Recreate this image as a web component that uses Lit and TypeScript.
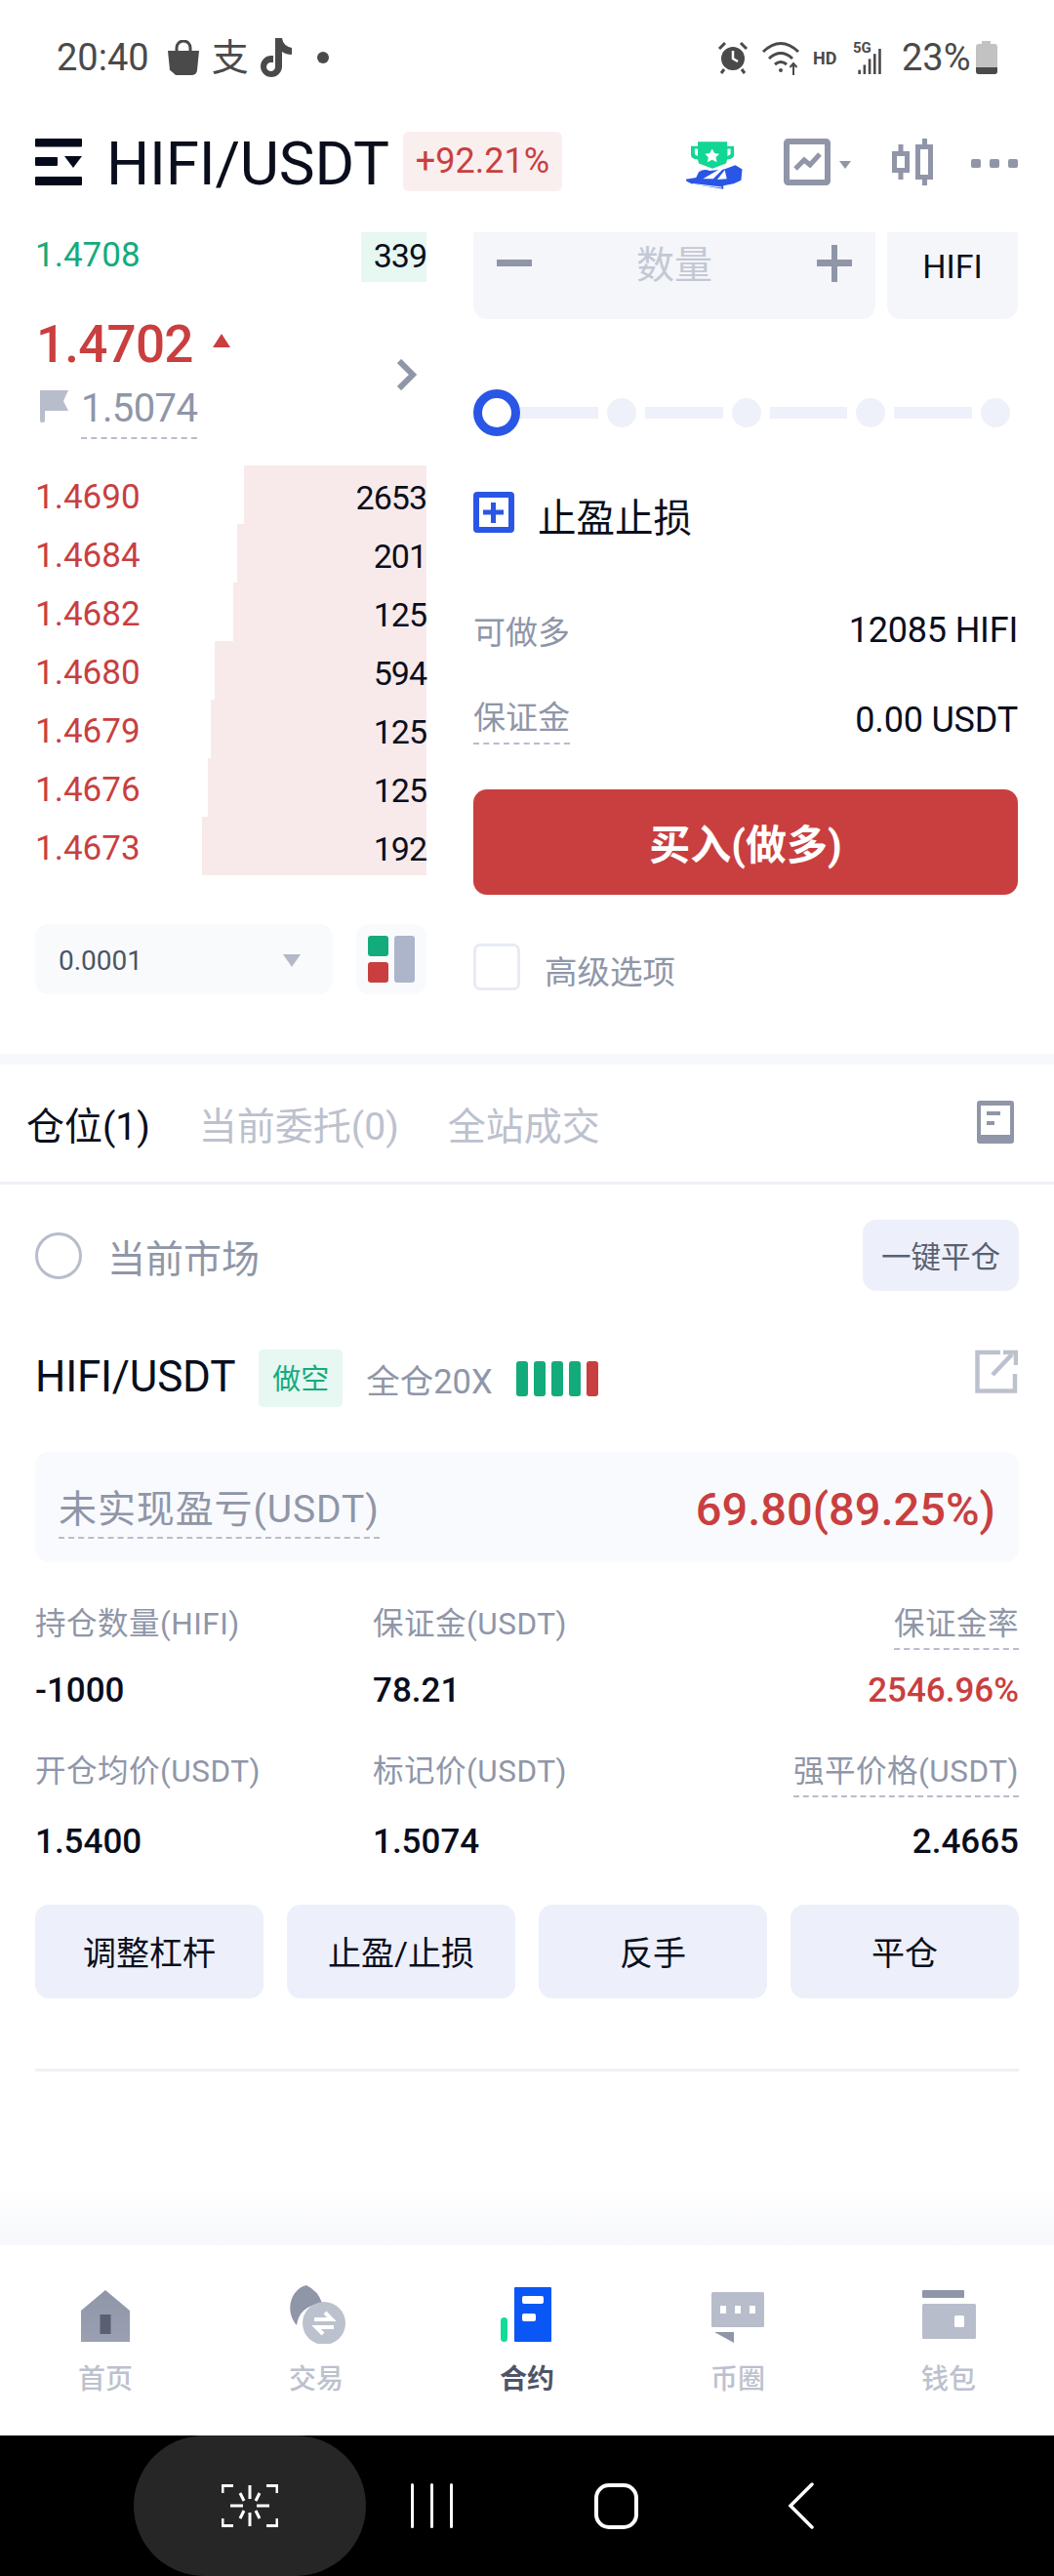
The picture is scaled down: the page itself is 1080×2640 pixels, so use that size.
import { LitElement, html, css, svg } from "lit";
import { customElement } from "lit/decorators.js";

const asks = [
  ["1.4690", "2653", 187],
  ["1.4684", "201", 194],
  ["1.4682", "125", 198],
  ["1.4680", "594", 217],
  ["1.4679", "125", 221],
  ["1.4676", "125", 224],
  ["1.4673", "192", 230],
] as const;

const stats = [
  [
    { l: "持仓数量(HIFI)", v: "-1000" },
    { l: "保证金(USDT)", v: "78.21" },
    { l: "保证金率", v: "2546.96%", dash: true, red: true },
  ],
  [
    { l: "开仓均价(USDT)", v: "1.5400" },
    { l: "标记价(USDT)", v: "1.5074" },
    { l: "强平价格(USDT)", v: "2.4665", dash: true },
  ],
];

const statusLeft = html`
  <svg width="34" height="36" viewBox="0 0 34 36"><path d="M10 11V8a7 7 0 0 1 14 0v3" fill="none" stroke="#4a4a4a" stroke-width="3"/><path d="M1 11h32l-2 20q-.5 5-6 5H9q-5.500-5-6-5z" fill="#4a4a4a"/></svg>
  <span class="zhi">支</span>
  <svg width="38" height="40" viewBox="0 0 38 40"><path d="M20 0h7q1 8 10 10v7q-6 0-10-3v15a11 11 0 1 1-11-11h2v7h-2a4.500 4.500 0 1 0 4 4.500z" fill="#4a4a4a"/></svg>
  <span class="sdot"></span>`;

const statusRight = html`
  <svg width="32" height="34" viewBox="0 0 32 34"><circle cx="16" cy="18" r="12" fill="#4a4a4a"/><path d="M16 10v8l5 3" stroke="#fff" stroke-width="2.500" fill="none"/><path d="M2 8l6-6M30 8l-6-6M7 29l-3 4M25 29l3 4" stroke="#4a4a4a" stroke-width="3"/></svg>
  <svg class="wifi" width="42" height="38" viewBox="0 0 42 38" fill="none" stroke="#4a4a4a" stroke-width="3"><path d="M2 13Q20-4 38 13M8 20q12-11 24 0M14 26q6-5 12 0"/><circle cx="20" cy="32" r="2" fill="#4a4a4a" stroke="none"/><path d="M33 37V25M29.500 29l3.500-4 3.500 4" stroke-width="2"/></svg>
  <span class="hd">HD</span>
  <span class="sig">
    <span class="fiveg">5G</span>
    <svg width="28" height="30" viewBox="0 0 28 30" fill="#4a4a4a"><rect x="0" y="25" width="3" height="5"/><rect x="6" y="19" width="3" height="11"/><rect x="12" y="12" width="3" height="18"/><rect x="18" y="6" width="3" height="24"/><rect x="24" y="0" width="3" height="30"/></svg>
  </span>
  <span class="pct">23%</span>
  <svg width="22" height="34" viewBox="0 0 22 34"><path d="M6 0h9v3h4q3 0 3 3v25q0 3-3 3H3q-3 0-3-3V6q0-3 3-3h3z" fill="#c2c2c2"/><path d="M0 27h22v4q0 3-3 3H3q-3 0-3-3z" fill="#4a4a4a"/></svg>`;

const menuIcon = html`<svg class="menu" width="48" height="48" viewBox="0 0 48 48" fill="#050a1a"><rect width="48" height="8.500" rx="1"/><rect y="19" width="23" height="9" rx="1"/><path d="M30 18h18l-9 12z"/><rect y="39" width="48" height="9" rx="1"/></svg>`;

const trophy = html`<svg width="63" height="54" viewBox="75 92 180 154">
  <path d="M115 101h86v13h20v27q-2 11-20 12l-3 12-40 15-40-15-3-12q-18-1-20-12v-27h20z" fill="#12d694"/>
  <path d="M106 122h9v21q-9-2-9-8zM211 122h-9v21q9-2 9-8z" fill="#fff"/>
  <path d="M157 122l7 13 14 2-10 10 3 14-14-7-14 7 3-14-10-10 14-2z" fill="#fff"/>
  <path d="M80 211l30-5 8-16q14-11 32-4l42-4 33-12 20 12-3 32-22 10-30 6v10l-92-15-16-8z" fill="#2a56e6"/>
  <path d="M130 210l48-28 12-2-30 30zM172 212l22-28 6 26z" fill="#fff"/>
  <path d="M100 225l85 10" stroke="#fff" stroke-width="3"/>
</svg>`;

const chartIcon = html`<svg width="70" height="48" viewBox="0 0 70 48">
  <rect x="3" y="3" width="42" height="42" rx="1.500" fill="none" stroke="#9096a8" stroke-width="6"/>
  <path d="M12 31l9-9 6 5 10-11" fill="none" stroke="#9096a8" stroke-width="5"/>
  <path d="M57 23h12l-6 8z" fill="#9096a8"/>
</svg>`;

const candleIcon = html`<svg width="42" height="48" viewBox="0 0 42 48" fill="#9096a8">
  <rect x="6.500" y="6" width="5" height="7"/><rect x="6.500" y="35" width="5" height="7"/>
  <path fill-rule="evenodd" d="M0 13h18v22H0zM5 18v12h8V18z"/>
  <rect x="31" y="0" width="5" height="6"/><rect x="31" y="42" width="5" height="6"/>
  <path fill-rule="evenodd" d="M24 6h18v36H24zM29 11v26h8V11z"/>
</svg>`;

const moreIcon = html`<span class="more"><i></i><i></i><i></i></span>`;

const docIcon = html`<svg width="38" height="44" viewBox="0 0 38 44"><rect x="2" y="2" width="34" height="40" rx="1" fill="none" stroke="#9096a8" stroke-width="4"/><rect x="2" y="35" width="34" height="7" fill="#9096a8"/><rect x="2" y="1" width="34" height="4" fill="#9096a8"/><rect x="10" y="11" width="14" height="4" fill="#9096a8"/><rect x="10" y="21" width="8" height="4" fill="#9096a8"/></svg>`;

const extIcon = html`<svg width="44" height="45" viewBox="0 0 44 45" fill="none" stroke="#bcc1ce" stroke-width="4.500"><path d="M26 3H2.500v39.500H41V25"/><path d="M18 26L38 5"/><path d="M29 3h13v13"/></svg>`;

const navIcons = [
  svg`<defs><linearGradient id="h" x1="0" y1="0" x2="0" y2="1"><stop offset="0" stop-color="#8f96a8"/><stop offset="1" stop-color="#9aa0b2"/></linearGradient></defs><path d="M25 5l25 21v32H0V26z" fill="url(#h)"/><rect x="19.500" y="30" width="11" height="20" fill="#5a6072"/>`,
  svg`<path d="M22 0C8 3-2 24 12 41Q14 22 38 18 34 6 22 0z" fill="#8f96a8"/><ellipse cx="40" cy="39" rx="22" ry="22" fill="#bcc1ce"/><path d="M30 35h18l-7-7M50 43H32l7 7" fill="none" stroke="#fff" stroke-width="4"/>`,
  svg`<rect x="14" y="2" width="38" height="56" rx="1" fill="#0a57f5"/><rect x="22" y="11" width="22" height="8" rx="2" fill="#fff"/><rect x="22" y="29" width="14" height="8" rx="2" fill="#fff"/><rect x="0" y="33" width="7" height="25" rx="3.500" fill="#12dc98"/>`,
  svg`<rect x="0" y="7" width="54" height="36" rx="1.500" fill="#b8bdcc"/><rect x="9" y="21" width="6" height="8" fill="#fff"/><rect x="24" y="21" width="6" height="8" fill="#fff"/><rect x="39" y="21" width="6" height="8" fill="#fff"/><path d="M3 48h20v11z" fill="#8f96a8"/>`,
  svg`<rect x="0" y="5" width="43" height="8" rx="1" fill="#8f96a8"/><rect x="0" y="19" width="55" height="36" rx="1.500" fill="#b8bdcc"/><rect x="33" y="31" width="10" height="12" rx="1.500" fill="#fff"/>`,
];
const navWidths = [50, 64, 54, 54, 55];
const navLabels = ["首页", "交易", "合约", "币圈", "钱包"];

const capture = html`<svg width="58" height="44" viewBox="0 0 58 44" fill="none" stroke="#fff" stroke-width="3">
  <path d="M1 9V1.500h11M57 9V1.500H46M1 35v7.500h11M57 35v7.500H46"/>
  <path d="M29 1v14M29 29v14M19 9l4 8M39 9l-4 8M19 35l4-8M39 35l-4-8M9 22h13M36 22h13"/>
</svg>`;

@customElement("app-root")
export class AppRoot extends LitElement {
  static styles = css`
    :host {
      display: flex;
      flex-direction: column;
      width: 1080px;
      height: 2640px;
      overflow: hidden;
      background: #fff;
      font-family: Roboto, "Noto Sans CJK SC", sans-serif;
      color: #0a0e1c;
      box-sizing: border-box;
    }
    * { box-sizing: border-box; }
    .status {
      height: 120px; flex: none; display: flex; justify-content: space-between; align-items: flex-start;
      padding: 39px 58px 0 58px; color: #4a4a4a;
    }
    .status-l, .status-r { display: flex; align-items: center; height: 40px; }
    .time { font-size: 38px; line-height: 40px; margin-right: 18px; }
    .zhi { font-size: 38px; line-height: 40px; margin: 0 5px 0 12px; width: 40px; }
    .sdot { width: 12px; height: 12px; border-radius: 50%; background: #4a4a4a; margin-left: 25px; }
    .wifi { margin-left: 13px; }
    .hd { font-size: 18px; font-weight: 700; margin-left: 11px; width: 29px; }
    .sig { display: flex; align-items: flex-end; width: 40px; margin-left: 12px; height: 40px; position: relative; }
    .fiveg { font-size: 15px; font-weight: 700; line-height: 16px; position: absolute; left: 0; top: 2px; }
    .sig svg { margin-left: 10px; margin-bottom: 3px; width: 27px; height: 26px; }
    .pct { font-size: 38px; line-height: 40px; margin-left: 10px; width: 72px; }
    .status-r svg:last-child { margin-left: 4px; }
    .header { height: 118px; flex: none; display: flex; align-items: flex-start; padding: 15px 37px 0 36px; }
    .menu { margin-top: 7px; flex: none; }
    .title { font-size: 62px; line-height: 62px; margin: 2px 0 0 25px; letter-spacing: -0.2px; white-space: nowrap; }
    .pill {
      width: 163px; height: 61px; margin: 0 0 0 14px; background: #faefef; border-radius: 6px;
      color: #c93f3f; font-size: 36px; line-height: 61px; text-align: center;
    }
    .tools { margin-left: auto; display: flex; align-items: flex-start; }
    .tools > :nth-child(1) { margin: 7px 0 0 0; }
    .tools > :nth-child(2) { margin: 7px 0 0 39px; }
    .tools > :nth-child(3) { margin: 7px 0 0 41px; }
    .more { display: flex; gap: 9px; margin: 28px 0 0 39px !important; }
    .more i { width: 10px; height: 9px; border-radius: 2px; background: #9096a8; }

    .trade { height: 842px; flex: none; display: flex; padding-left: 36px; }
    .book { width: 401px; flex: none; }
    .row { position: relative; display: flex; justify-content: space-between; font-size: 35px; }
    .row span { position: relative; }
    .depth { position: absolute; top: 0; bottom: 0; right: 0; }
    .bid { height: 51px; line-height: 48px; color: #14ab7c; }
    .bid .depth { background: #e7f7f1; }
    .ask { height: 60px; line-height: 66px; color: #c93f3f; }
    .ask .depth { background: #f8eaea; }
    .row b { font-weight: 400; color: #0a0e1c; position: relative; font-size: 34px; letter-spacing: -1px; }
    .mid { height: 188px; display: flex; justify-content: space-between; padding: 36px 10px 0 2px; }
    .last { font-size: 53px; font-weight: 500; line-height: 56px; color: #c93f3f; display: flex; align-items: center; gap: 20px; letter-spacing: -0.8px; margin-left: -1px; }
    .last i { width: 0; height: 0; border-left: 9px solid transparent; border-right: 9px solid transparent; border-bottom: 14px solid #c93f3f; margin-top: -8px; }
    .mark { display: flex; margin-top: 14px; align-items: flex-start; gap: 13px; }
    .mark svg { margin: 5px 0 0 3px; }
    .mark-val { font-size: 40px; line-height: 48px; color: #8f96a8; padding-bottom: 5px; border-bottom: 2px dashed #b8bdcc; letter-spacing: -0.6px; }
    .chev { margin-top: 43px; }
    .book-foot { display: flex; justify-content: space-between; margin-top: 50px; }
    .sel {
      width: 305px; height: 72px; background: #f9fafc; border-radius: 14px; display: flex; align-items: center;
      justify-content: space-between; padding: 2px 33px 0 24px; font-size: 28px; color: #4a5568;
    }
    .sel i { width: 0; height: 0; border-left: 9px solid transparent; border-right: 9px solid transparent; border-top: 13px solid #b4b9c7; }
    .lay { width: 72px; height: 72px; background: #f9fafc; border-radius: 14px; display: grid; grid-template-columns: 21px 21px; grid-template-rows: 21px 21px; gap: 6px; padding: 12px; }
    .lay i { border-radius: 3px; }
    .lay .g { background: #14ab7c; }
    .lay .r { background: #c93f3f; grid-row: 2; grid-column: 1; }
    .lay .b { background: #acb5ca; grid-row: 1 / 3; grid-column: 2; }

    .order { width: 558px; margin-left: 48px; flex: none; }
    .inp-row { display: flex; height: 89px; gap: 12px; }
    .inp {
      width: 412px; background: #f4f6fa; border-radius: 0 0 14px 14px; display: flex; justify-content: space-between;
      align-items: flex-start; padding: 10px 24px 0 24px; color: #c4c8d4; font-size: 39px; line-height: 48px;
    }
    .inp svg { margin-top: 3px; }
    .unit { width: 134px; background: #f4f6fa; border-radius: 0 0 14px 14px; text-align: center; font-size: 34px; line-height: 46px; padding-top: 12px; }
    .slider { display: flex; align-items: center; height: 48px; margin-top: 72px; }
    .knob { width: 48px; height: 48px; border: 9px solid #2a56e6; border-radius: 50%; flex: none; }
    .seg { height: 12px; background: #eef1f9; flex: 1; }
    .dot { width: 30px; height: 30px; border-radius: 50%; background: #eef1f9; flex: none; margin: 0 9px; }
    .tpsl { display: flex; margin-top: 57px; height: 42px; align-items: center; gap: 24px; font-size: 39.500px; }
    .tpsl span { margin-top: 4px; }
    .kv { display: flex; justify-content: space-between; align-items: center; font-size: 33px; height: 50px; color: #8f96a8; }
    .kv b { font-weight: 400; color: #0a0e1c; font-size: 36px; letter-spacing: -0.2px; }
    .k1 { margin-top: 75px; }
    .k2 { margin-top: 42px; height: 58px; align-items: flex-start; }
    .k2 span { border-bottom: 2px dashed #b8bdcc; line-height: 46px; padding-bottom: 2px; }
    .k2 b { line-height: 50px; }
    .buy {
      margin-top: 38px; height: 108px; background: #c93f3f; border-radius: 14px; color: #fff; font-weight: 700;
      font-size: 42px; line-height: 116px; text-align: center;
    }
    .adv { display: flex; align-items: center; margin-top: 50px; gap: 25px; color: #8f96a8; font-size: 33.500px; height: 48px; }
    .adv i { width: 48px; height: 48px; border: 3px solid #e8ebf3; border-radius: 7px; }
    .adv span { margin-top: 4px; }

    .band { height: 11px; flex: none; background: #f7f8fb; }
    .tabs { height: 123px; flex: none; display: flex; align-items: center; padding: 0 41px 0 27px; border-bottom: 3px solid #eef1f8; font-size: 39px; color: #bcc1ce; gap: 50px; }
    .tabs .on { color: #0a0e1c; }
    .tabs svg { margin-left: auto; margin-top: -3px; }
    .body { padding: 36px 36px 0; flex: none; }
    .filter { display: flex; align-items: center; height: 73px; color: #8f96a8; font-size: 39px; }
    .radio { width: 48px; height: 48px; border: 3px solid #b8bdcc; border-radius: 50%; margin-right: 26px; }
    .close-all { margin-left: auto; width: 160px; height: 73px; background: #edf0fa; border-radius: 14px; text-align: center; font-size: 30.500px; line-height: 77px; color: #5a6072; }
    .sym { display: flex; align-items: flex-start; margin-top: 60px; height: 59px; }
    .sym-n { font-size: 44px; line-height: 56px; letter-spacing: -0.2px; }
    .tag { width: 86px; height: 59px; background: #e7f7f1; color: #14ab7c; border-radius: 5px; text-align: center; font-size: 29px; line-height: 62px; margin-left: 24px; }
    .lev { font-size: 34.500px; line-height: 66px; color: #8f96a8; margin-left: 24px; }
    .bars { display: flex; gap: 6px; margin: 12px 0 0 24px; }
    .bars i { width: 12px; height: 36px; border-radius: 3px; background: #14ab7c; }
    .bars i:last-child { background: #c93f3f; }
    .sym svg { margin-left: auto; margin-right: 1px; }
    .pnl { height: 113px; margin-top: 46px; background: #f9fafd; border-radius: 14px; display: flex; justify-content: space-between; padding: 0 24px; }
    .pnl-l { font-size: 39px; letter-spacing: 0.9px; color: #8f96a8; line-height: 56px; margin-top: 31px; height: 58px; border-bottom: 2px dashed #b8bdcc; }
    .pnl-v { font-size: 47px; font-weight: 500; color: #c93f3f; line-height: 56px; margin-top: 31px; }
    .stats { display: grid; grid-template-columns: 346px 1fr auto; margin-top: 41px; }
    .cell { height: 151px; }
    .cell.r2 { height: 159px; }
    .cell.end { text-align: right; }
    .lbl { display: inline-block; font-size: 31.500px; color: #8f96a8; line-height: 46px; letter-spacing: 0.5px; }
    .lbl.dash { border-bottom: 2px dashed #b8bdcc; padding-bottom: 1px; }
    .val { font-size: 35px; font-weight: 500; line-height: 50px; margin-top: 20px; }
    .r2 .val { margin-top: 24px; }
    .val.red { color: #c93f3f; }
    .lbl.dash + .val { margin-top: 17px; }
    .r2 .lbl.dash + .val { margin-top: 21px; }
    .acts { display: grid; grid-template-columns: repeat(4, 234px); column-gap: 24px; }
    .acts div { height: 96px; background: #edf0fa; border-radius: 14px; text-align: center; font-size: 34px; line-height: 100px; }
    .rule { height: 3px; background: #eff1f7; margin-top: 72px; }
    .fade { flex: 1; background: linear-gradient(#fff 65%, #f7f8fb 100%); }
    .nav { height: 195px; flex: none; display: grid; grid-template-columns: repeat(5, 216px); padding-top: 41px; }
    .nav-i { display: flex; flex-direction: column; align-items: center; }
    .nav-i svg { height: 60px; }
    .nav-i span { font-size: 28px; line-height: 40px; font-weight: 500; color: #bcc1ce; margin-top: 17px; }
    .nav-i.on span { color: #4e5468; font-weight: 700; }
    .sys { height: 144px; flex: none; background: #000; display: flex; align-items: center; padding-left: 137px; }
    .cap { width: 238px; height: 144px; background: #262626; border-radius: 100px; display: flex; align-items: center; justify-content: center; }
    .rec { display: flex; gap: 17px; margin-left: 46px; }
    .rec i { width: 3px; height: 46px; background: #fff; border-radius: 2px; }
    .homeb { width: 45px; height: 47px; border: 4px solid #fff; border-radius: 15px; margin-left: 145px; }
    .back { margin-left: 153px; }
  `;

  render() {
    return html`
      <div class="status">
        <div class="status-l"><span class="time">20:40</span>${statusLeft}</div>
        <div class="status-r">${statusRight}</div>
      </div>

      <div class="header">
        ${menuIcon}
        <div class="title">HIFI/USDT</div>
        <div class="pill">+92.21%</div>
        <div class="tools">${trophy}${chartIcon}${candleIcon}${moreIcon}</div>
      </div>

      <div class="trade">
        <div class="book">
          <div class="row bid"><div class="depth" style="width:67px"></div><span>1.4708</span><b>339</b></div>
          <div class="mid">
            <div>
              <div class="last">1.4702<i></i></div>
              <div class="mark">
                <svg width="29" height="33" viewBox="0 0 29 33" fill="#b8bdcc"><rect width="5" height="33" rx="2"/><path d="M0 0h29l-5 11 5 10H0z"/></svg>
                <span class="mark-val">1.5074</span>
              </div>
            </div>
            <svg class="chev" width="20" height="32" viewBox="0 0 20 32" fill="none" stroke="#9096a8" stroke-width="6"><path d="M2 2l14 14L2 30"/></svg>
          </div>
          ${asks.map(
            ([p, q, w]) => html`<div class="row ask"><div class="depth" style="width:${w}px"></div><span>${p}</span><b>${q}</b></div>`
          )}
          <div class="book-foot">
            <div class="sel">0.0001<i></i></div>
            <div class="lay"><i class="g"></i><i class="r"></i><i class="b"></i></div>
          </div>
        </div>

        <div class="order">
          <div class="inp-row">
            <div class="inp">
              <svg width="36" height="36" viewBox="0 0 36 36" fill="#9096a8"><rect y="15" width="36" height="7"/></svg>
              <span>数量</span>
              <svg width="36" height="38" viewBox="0 0 36 38" fill="#9096a8"><rect y="15" width="36" height="7"/><rect x="15" width="6" height="38"/></svg>
            </div>
            <div class="unit">HIFI</div>
          </div>
          <div class="slider">
            <div class="knob"></div><div class="seg"></div>
            <div class="dot"></div><div class="seg"></div>
            <div class="dot"></div><div class="seg"></div>
            <div class="dot"></div><div class="seg"></div>
            <div class="dot" style="margin-right:8px"></div>
          </div>
          <div class="tpsl">
            <svg width="42" height="42" viewBox="0 0 42 42"><rect x="3" y="3" width="36" height="36" rx="1" fill="none" stroke="#2a56e6" stroke-width="6"/><path d="M10 21h21M20.500 11v21" stroke="#2a56e6" stroke-width="5"/></svg>
            <span>止盈止损</span>
          </div>
          <div class="kv k1"><span>可做多</span><b>12085 HIFI</b></div>
          <div class="kv k2"><span>保证金</span><b>0.00 USDT</b></div>
          <div class="buy">买入(做多)</div>
          <div class="adv"><i></i><span>高级选项</span></div>
        </div>
      </div>

      <div class="band"></div>
      <div class="tabs">
        <span class="on">仓位(1)</span><span>当前委托(0)</span><span>全站成交</span>${docIcon}
      </div>

      <div class="body">
        <div class="filter"><i class="radio"></i><span>当前市场</span><div class="close-all">一键平仓</div></div>
        <div class="sym">
          <span class="sym-n">HIFI/USDT</span>
          <span class="tag">做空</span>
          <span class="lev">全仓20X</span>
          <span class="bars"><i></i><i></i><i></i><i></i><i></i></span>
          ${extIcon}
        </div>
        <div class="pnl">
          <span class="pnl-l">未实现盈亏(USDT)</span>
          <span class="pnl-v">69.80(89.25%)</span>
        </div>
        <div class="stats">
          ${stats.map((row, ri) =>
            row.map(
              (c: any, ci) => html`<div class="cell ${ri ? "r2" : ""} ${ci === 2 ? "end" : ""}">
                <div class="lbl ${c.dash ? "dash" : ""}">${c.l}</div>
                <div class="val ${c.red ? "red" : ""}">${c.v}</div>
              </div>`
            )
          )}
        </div>
        <div class="acts"><div>调整杠杆</div><div>止盈/止损</div><div>反手</div><div>平仓</div></div>
        <div class="rule"></div>
      </div>

      <div class="fade"></div>

      <div class="nav">
        ${navIcons.map(
          (ic, i) => html`<div class="nav-i ${i === 2 ? "on" : ""}">
            <svg width="${navWidths[i]}" height="60" viewBox="0 0 ${navWidths[i]} 60">${ic}</svg>
            <span>${navLabels[i]}</span>
          </div>`
        )}
      </div>

      <div class="sys">
        <div class="cap">${capture}</div>
        <div class="rec"><i></i><i></i><i></i></div>
        <div class="homeb"></div>
        <svg class="back" width="28" height="48" viewBox="0 0 28 48" fill="none" stroke="#fff" stroke-width="3.500" stroke-linecap="round"><path d="M25 2L3 24l22 22"/></svg>
      </div>
    `;
  }
}
